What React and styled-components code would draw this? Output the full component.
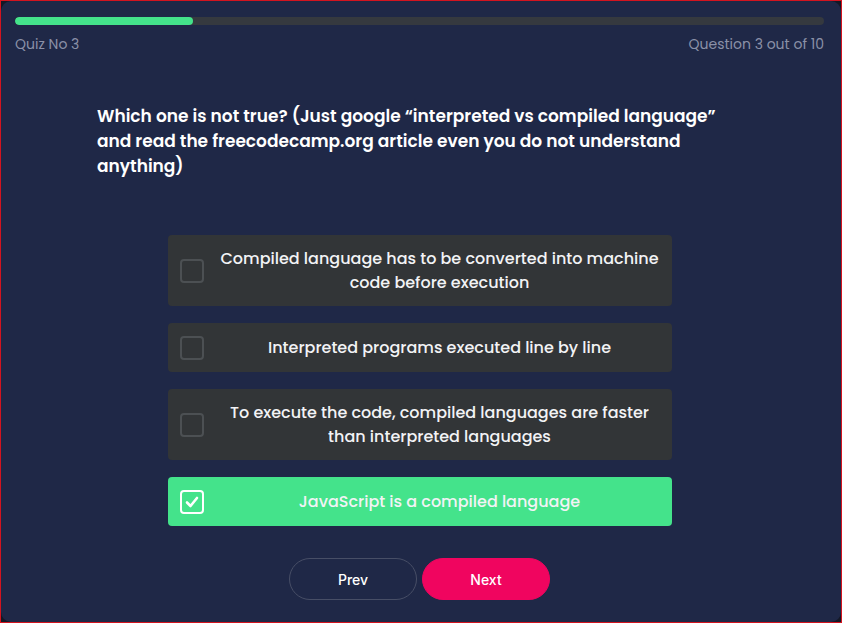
import styled, { createGlobalStyle } from "styled-components";

const GlobalStyle = createGlobalStyle`
  html, body { margin: 0; padding: 0; background: #141826; }
  * { box-sizing: border-box; }
`;

const Frame = styled.div`
  width: 842px;
  height: 623px;
  border: 1px solid #d3141f;
  background: #141826;
`;

const Card = styled.div`
  height: 100%;
  border-radius: 10px;
  background: #1f2847;
  padding: 16px 17px 0 14px;
  font-family: "Poppins", "Open Sans", "Noto Sans", sans-serif;
  display: flex;
  flex-direction: column;
`;

const Track = styled.div`
  height: 8px;
  border-radius: 4px;
  background: #35393f;
  overflow: hidden;
`;

const Fill = styled.div`
  height: 100%;
  border-radius: 4px;
  background: #44e38b;
`;

const InfoRow = styled.div`
  display: flex;
  justify-content: space-between;
  margin-top: 9px;
  font-size: 14px;
  color: #8b91a7;
`;

const Question = styled.h2`
  width: 645px;
  margin: 49px auto 0;
  padding-right: 22px;
  color: #ffffff;
  font-size: 17px;
  font-weight: 600;
  line-height: 25px;
`;

const Options = styled.div`
  width: 504px;
  margin: 56px auto 0;
  display: flex;
  flex-direction: column;
  gap: 17px;
`;

const Option = styled.div`
  display: flex;
  align-items: center;
  min-height: 49px;
  padding: 12px 12px 11px;
  border-radius: 4px;
  background: ${p => (p.checked ? "#44e38b" : "#323537")};
  cursor: pointer;
`;

const Box = styled.span`
  flex: none;
  width: 24px;
  height: 24px;
  border-radius: 4px;
  border: 2px solid ${p => (p.checked ? "#ffffff" : "#4c5053")};
  display: flex;
  align-items: center;
  justify-content: center;
`;

const Label = styled.span`
  flex: 1;
  text-align: center;
  color: #f2f3f5;
  font-size: 16px;
  font-weight: 500;
  line-height: 24px;
  padding-left: 16px;
`;

const Buttons = styled.div`
  display: flex;
  justify-content: center;
  gap: 5px;
  margin-top: 32px;
`;

const Button = styled.button`
  width: 128px;
  height: 42px;
  border-radius: 21px;
  border: 1px solid ${p => (p.primary ? "#f0055f" : "#474e66")};
  background: ${p => (p.primary ? "#f0055f" : "transparent")};
  color: #ffffff;
  font-family: "Inter", "Liberation Sans", sans-serif;
  font-size: 14px;
  font-weight: 500;
  cursor: pointer;
`;

const options = [
  "Compiled language has to be converted into machine code before execution",
  "Interpreted programs executed line by line",
  "To execute the code, compiled languages are faster than interpreted languages",
  "JavaScript is a compiled language",
];

export default function App() {
  const selected = 3;
  return (
    <>
      <GlobalStyle />
      <Frame>
        <Card>
          <Track>
            <Fill style={{ width: `${(3 / 10) * 100 - 8}%` }} />
          </Track>
          <InfoRow>
            <span>Quiz No 3</span>
            <span>Question 3 out of 10</span>
          </InfoRow>
          <Question>
            Which one is not true? (Just google “interpreted vs compiled language”
            and read the freecodecamp.org article even you do not understand
            anything)
          </Question>
          <Options>
            {options.map((text, i) => (
              <Option key={i} checked={i === selected}>
                <Box checked={i === selected}>
                  {i === selected && (
                    <svg width="14" height="12" viewBox="0 0 14 12">
                      <path d="M2 6.5 L5.5 10 L12 2" fill="none" stroke="#fff" strokeWidth="2.6" strokeLinecap="round" strokeLinejoin="round" />
                    </svg>
                  )}
                </Box>
                <Label>{text}</Label>
              </Option>
            ))}
          </Options>
          <Buttons>
            <Button>Prev</Button>
            <Button primary>Next</Button>
          </Buttons>
        </Card>
      </Frame>
    </>
  );
}
